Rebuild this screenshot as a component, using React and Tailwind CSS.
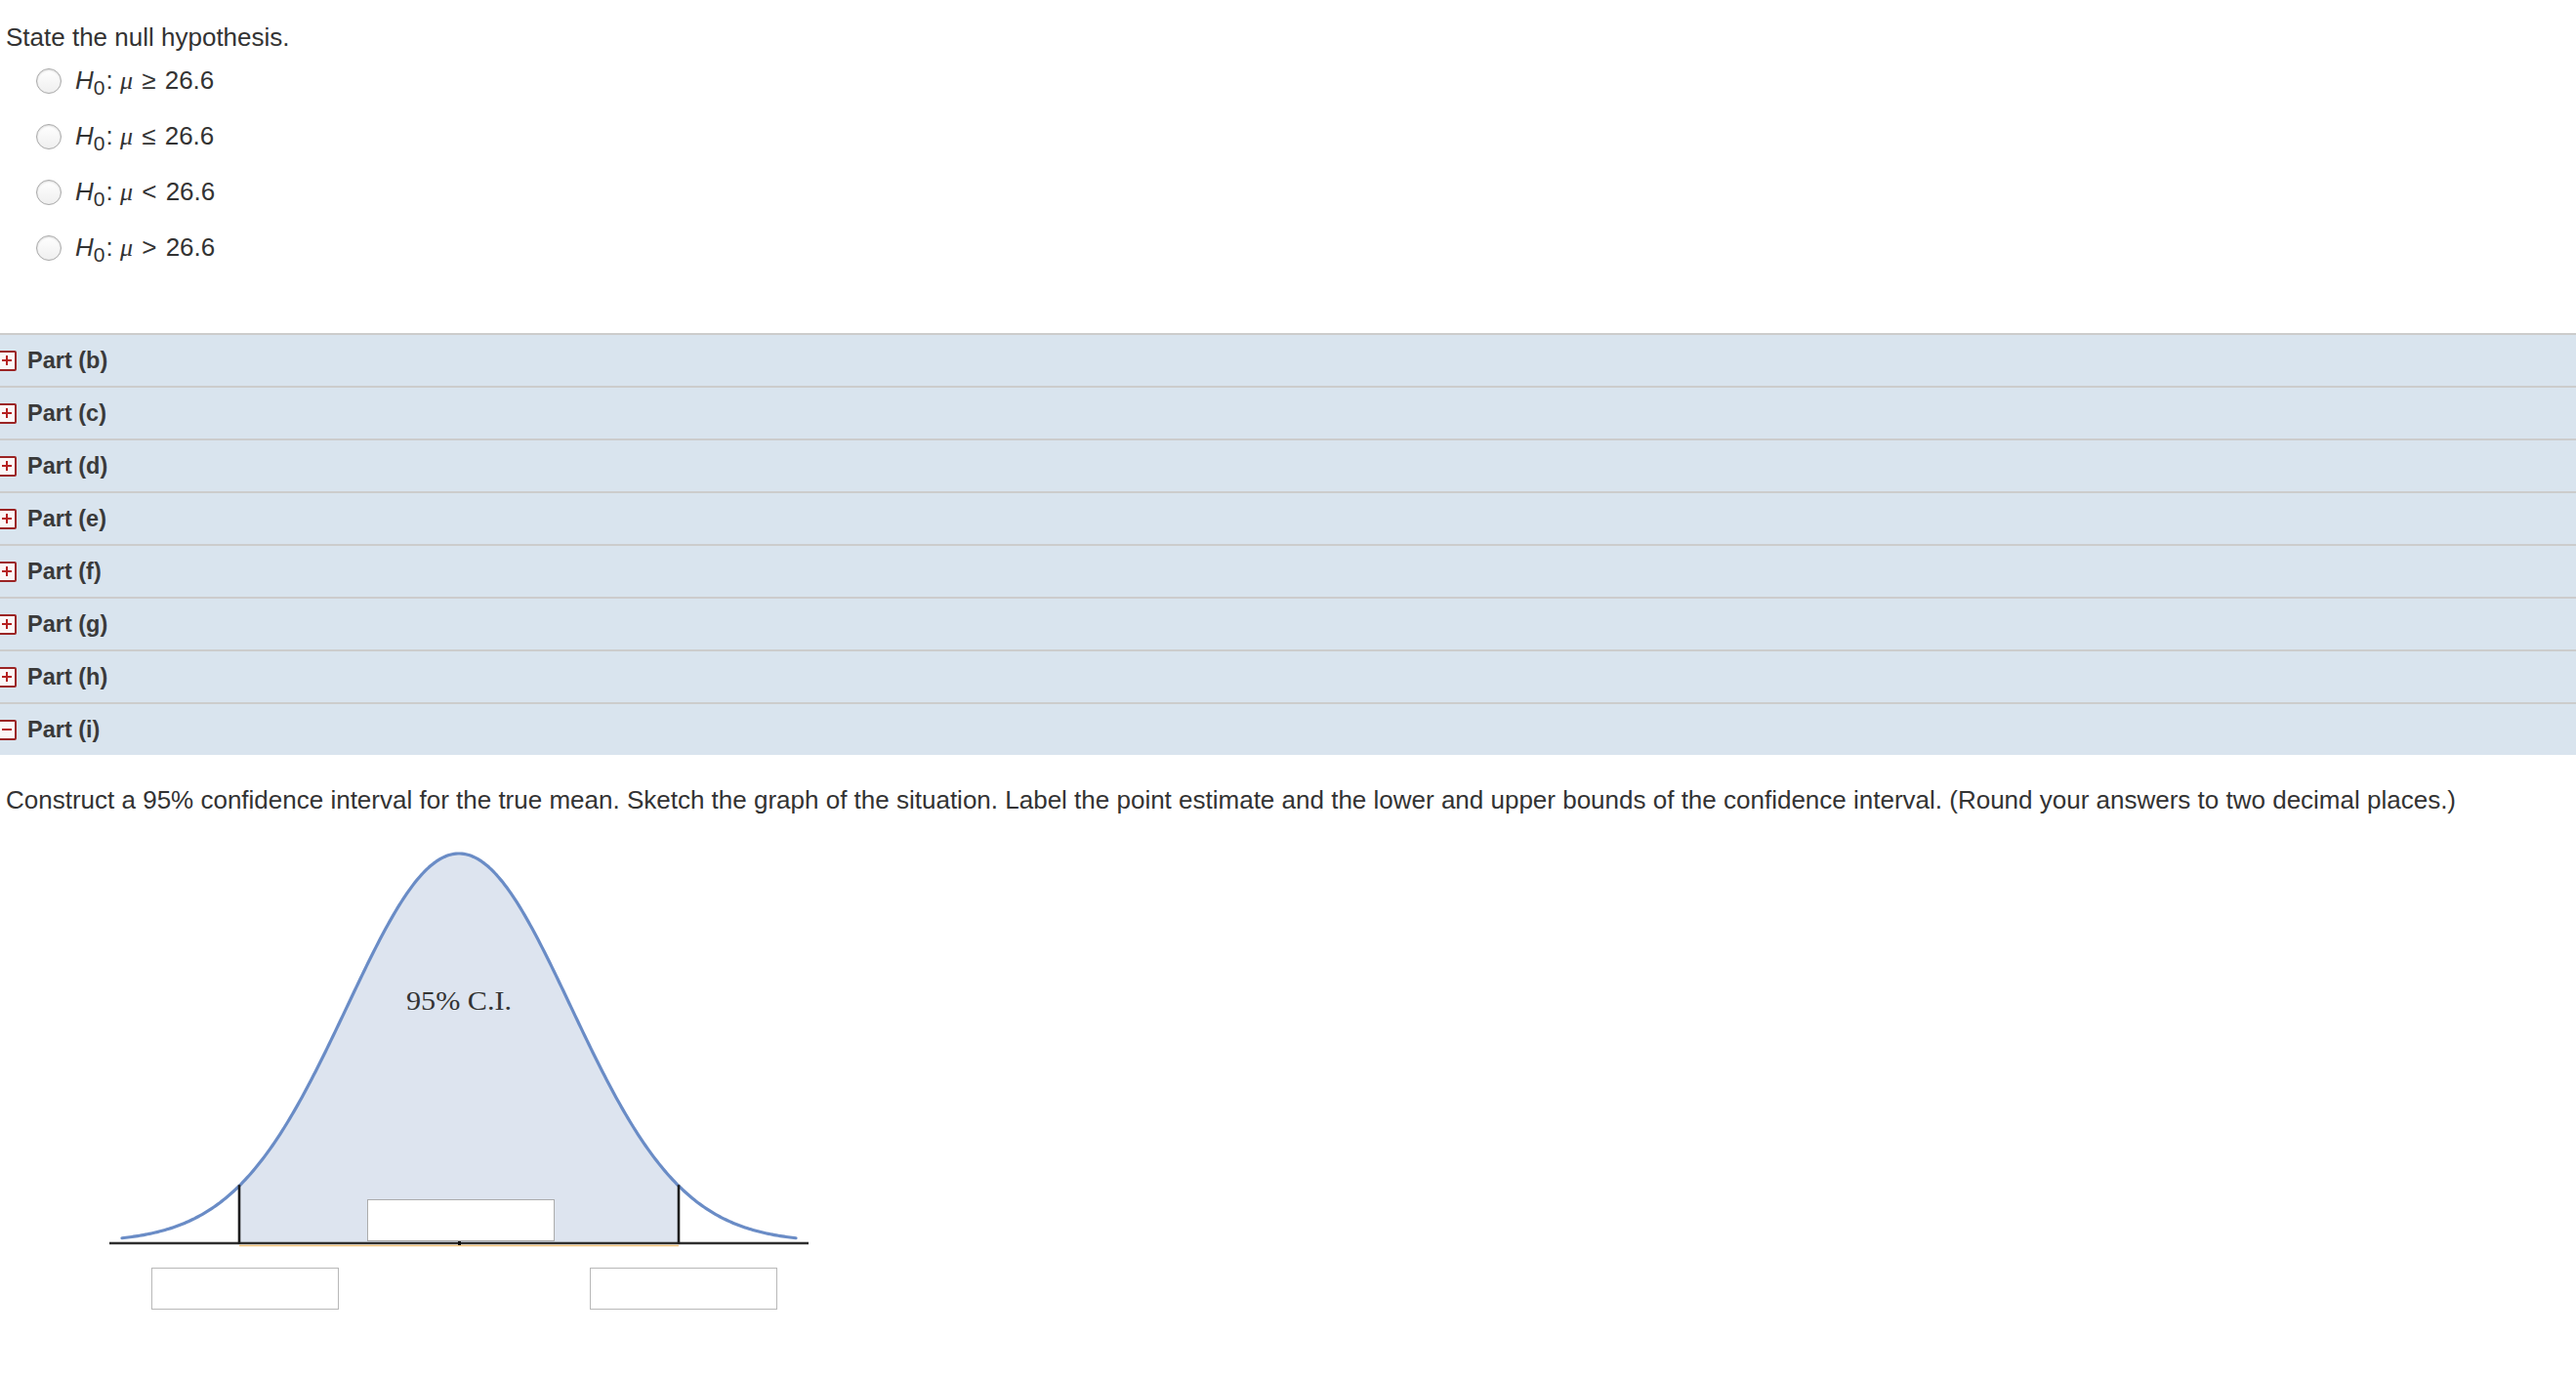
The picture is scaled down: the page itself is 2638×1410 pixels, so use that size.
const OPTIONS = ['≥', '≤', '<', '>'];
const PARTS = ['b', 'c', 'd', 'e', 'f', 'g', 'h', 'i'];
const OPEN_PART = 'i';

// normal curve, mean at x=370, sigma 114.5px, peak 398px above the axis
const CX = 370;
const SIGMA = 114.5;
const BASE_Y = 413;
const PEAK = 398;
const curveY = (x) => {
  const z = (x - CX) / SIGMA;
  return BASE_Y - PEAK * Math.exp(-(z * z) / 2);
};

const pathFor = (x0, x1) => {
  const pts = [];
  for (let x = x0; x <= x1; x += 2) pts.push(`${x},${curveY(x).toFixed(2)}`);
  return pts;
};

const CURVE = 'M' + pathFor(25, 715).join(' L');
const LO = 145;
const HI = 595;
const AREA = `M${LO},414 L` + pathFor(LO, HI).join(' L') + ` L${HI},414 Z`;

function Radio({ sign }) {
  return (
    <label className="flex h-[57.2px] items-center pl-[37px]">
      <span className="mr-[14px] h-[26px] w-[26px] shrink-0 rounded-full border border-[#a9a9a9] bg-gradient-to-b from-white to-[#efefef] shadow-[inset_0_1px_2px_rgba(0,0,0,0.15)]" />
      <span className="whitespace-pre leading-[30px]">
        <i>H</i>
        <span className="relative top-[6px] mr-[1px] text-[21px]">0</span>
        {': '}
        <i className="font-['Liberation_Serif',serif]">μ</i>
        <span className="ml-[2px]">{` ${sign} `}</span>
        <span className="ml-[2px]">26.6</span>
      </span>
    </label>
  );
}

function Toggle({ open }) {
  return (
    <span className="-ml-[3px] mr-[11px] flex h-[21px] w-[20px] shrink-0 items-center justify-center rounded-[2px] border-2 border-[#9b2424] bg-[#fbf7f7]">
      <svg width="10" height="10" viewBox="0 0 10 10">
        <rect x="0" y="4" width="10" height="2" fill="#b51f1f" />
        {!open && <rect x="4" y="0" width="2" height="10" fill="#b51f1f" />}
      </svg>
    </span>
  );
}

export default function App() {
  return (
    <div className="min-h-screen bg-white font-['Liberation_Sans',Arial,sans-serif] text-[26px] text-[#333333]">
      <p className="pl-[6px] pt-[24px] leading-[29px]">State the null hypothesis.</p>
      <div className="mt-[1px] flex flex-col">
        {OPTIONS.map((s) => (
          <Radio key={s} sign={s} />
        ))}
      </div>

      {/* collapsed question parts */}
      <div className="mt-[58px]">
        {PARTS.map((p) => (
          <div
            key={p}
            className="flex h-[54px] items-center border-t-2 border-[#cccccc] bg-[#d9e4ee] pt-[1px]"
          >
            <Toggle open={p === OPEN_PART} />
            <span className="text-[23.5px] font-bold leading-[52px] text-[#3a3a3a]">Part ({p})</span>
          </div>
        ))}
      </div>

      <p className="mt-[31px] pl-[6px] leading-[30px]">
        Construct a 95% confidence interval for the true mean. Sketch the graph of the situation. Label the point
        estimate and the lower and upper bounds of the confidence interval. (Round your answers to two decimal places.)
      </p>

      {/* confidence interval sketch */}
      <div className="relative ml-[100px] mt-[25px] h-[500px] w-[760px]">
        <svg width="760" height="430" viewBox="0 0 760 430">
          <path d={AREA} fill="#dde4ef" />
          <path d={CURVE} fill="none" stroke="#6a8cc6" strokeWidth="3.2" strokeLinejoin="round" strokeLinecap="round" />
          <line x1="12" y1="414" x2="728" y2="414" stroke="#2e2e2e" strokeWidth="2.5" />
          <line x1={LO} y1="416.5" x2={HI} y2="416.5" stroke="#f2c47e" strokeWidth="1.5" />
          <line x1={LO} y1={curveY(LO) - 1} x2={LO} y2="415" stroke="#1e1e1e" strokeWidth="2.6" />
          <line x1={HI} y1={curveY(HI) - 1} x2={HI} y2="415" stroke="#1e1e1e" strokeWidth="2.6" />
          <rect x="369" y="412" width="3" height="4" fill="#111" />
          <text
            x={CX}
            y="175"
            textAnchor="middle"
            fontFamily="'Liberation Serif', serif"
            fontSize="28"
            fill="#333"
            textLength="108"
            lengthAdjust="spacingAndGlyphs"
          >
            95% C.I.
          </text>
        </svg>
        <input
          aria-label="point estimate"
          className="absolute left-[276px] top-[369px] h-[43px] w-[192px] border border-[#acacac] bg-white outline-none"
        />
        <input
          aria-label="lower bound"
          className="absolute left-[55px] top-[439px] h-[43px] w-[192px] border border-[#b8b8b8] bg-white outline-none"
        />
        <input
          aria-label="upper bound"
          className="absolute left-[504px] top-[439px] h-[43px] w-[192px] border border-[#b8b8b8] bg-white outline-none"
        />
      </div>
    </div>
  );
}
